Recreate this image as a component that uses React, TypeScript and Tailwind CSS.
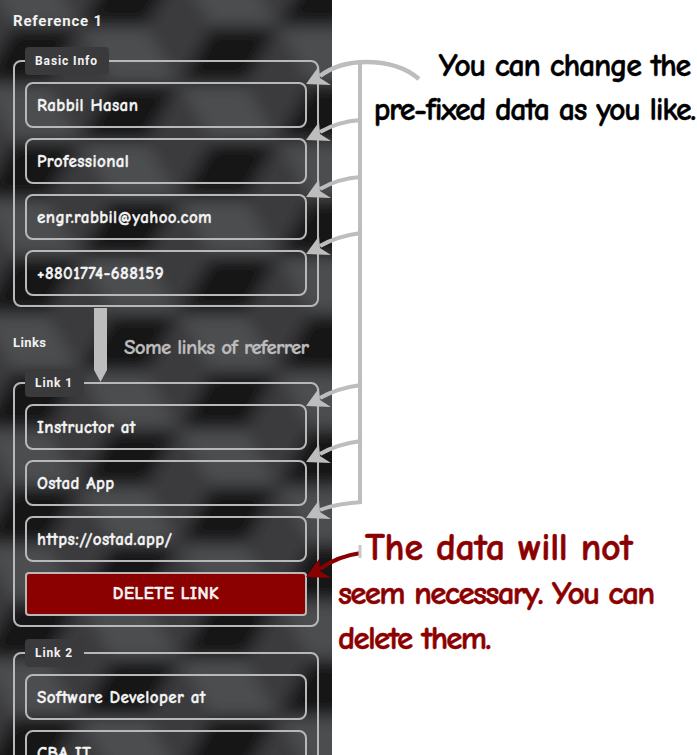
import React from 'react';

const handFont = "font-['Comic_Neue','Comic_Sans_MS',cursive]";
const labelFont = "font-['Roboto',sans-serif]";

const Legend = ({ label, w }: { label: string; w: string }) => (
  <div className={`absolute -top-[15px] left-[10px] h-7 ${w} rounded bg-[#3a3a3c] pl-[10px] text-[12px] font-bold leading-[28px] tracking-[0.9px] text-[#f2f2f2] ${labelFont}`}>
    {label}
  </div>
);

const Field = ({ value }: { value: string }) => (
  <div className={`h-[46px] shrink-0 rounded-lg border-2 border-[#b8b8b8] pl-[10px] text-[17px] font-bold leading-[44px] tracking-[0.4px] text-[#f4f4f4] [-webkit-text-stroke:0.35px_#f4f4f4] ${handFont}`}>
    {value}
  </div>
);

const Group = ({ label, w, fields, children }: { label: string; w: string; fields: string[]; children?: React.ReactNode }) => (
  <div className="relative flex flex-col gap-[10px] rounded-lg border-2 border-[#b8b8b8] px-[10px] pb-[9px] pt-5">
    <Legend label={label} w={w} />
    {fields.map((f) => (
      <Field key={f} value={f} />
    ))}
    {children}
  </div>
);

// tumbling blocks behind the panel, three faces per hexagon
const A = 66;
const H = 57.5;
const faces: { points: string; fill: string }[] = [];
for (let col = -2; col < 5; col++) {
  for (let row = -1; row < 9; row++) {
    const cx = 245 + (col - 2) * (A * 1.5);
    const cy = 84 + row * (H * 2) + (col % 2 === 0 ? 0 : -H);
    faces.push({
      points: `${cx - A},${cy} ${cx - A / 2},${cy - H} ${cx + A / 2},${cy - H} ${cx},${cy}`,
      fill: '#181818',
    });
    faces.push({
      points: `${cx},${cy} ${cx + A / 2},${cy + H} ${cx - A / 2},${cy + H} ${cx - A},${cy}`,
      fill: '#4c4d4f',
    });
    faces.push({
      points: `${cx},${cy} ${cx + A / 2},${cy - H} ${cx + A},${cy} ${cx + A / 2},${cy + H}`,
      fill: '#3a3b3d',
    });
  }
}

const Backdrop = () => (
  <svg className="absolute inset-0" width="332" height="755" viewBox="0 0 332 755">
    <defs>
      <filter id="soft" x="-10%" y="-10%" width="120%" height="120%">
        <feGaussianBlur stdDeviation="8" />
      </filter>
    </defs>
    <rect width="332" height="755" fill="#333436" />
    <g filter="url(#soft)">
      {faces.map((f) => (
        <polygon key={f.points} points={f.points} fill={f.fill} />
      ))}
    </g>
  </svg>
);

const Head = ({ x, y, fill }: { x: number; y: number; fill: string }) => (
  <polygon points={`${x},${y} ${x + 13},${y - 18} ${x + 14},${y - 6} ${x + 25},${y + 1}`} fill={fill} />
);

const ARROW_Y = [84, 140, 197, 254, 406, 462, 518];

const Annotations = () => (
  <svg className="pointer-events-none absolute inset-0" width="697" height="755" viewBox="0 0 697 755" fill="none">
    {/* long vertical rail and its branches */}
    <path d="M360 62V504" stroke="#bdbdbd" strokeWidth="4" />
    <path d="M320 76C332 67 348 62 366 62C388 62 405 67 419 79" stroke="#bdbdbd" strokeWidth="4.5" />
    <path d="M320 132C332 125 346 121 361 120" stroke="#bdbdbd" strokeWidth="4" />
    <path d="M320 189C332 182 346 178 361 177" stroke="#bdbdbd" strokeWidth="4" />
    <path d="M320 246C332 239 346 235 361 233" stroke="#bdbdbd" strokeWidth="4" />
    <path d="M320 398C332 391 346 387 361 385" stroke="#bdbdbd" strokeWidth="4" />
    <path d="M320 454C332 447 346 443 361 441" stroke="#bdbdbd" strokeWidth="4" />
    <path d="M320 510C332 505 348 503 362 502" stroke="#bdbdbd" strokeWidth="4" />
    {ARROW_Y.map((y) => (
      <Head key={y} x={306} y={y} fill="#bdbdbd" />
    ))}
    {/* thick arrow down to Link 1 */}
    <polygon points="94,308 107,308 107,370 100.5,382 94,370" fill="#bdbdbd" />
    {/* dark red arrow to delete button */}
    <path d="M320 569C332 560 346 555 361 553" stroke="#8b0000" strokeWidth="4" />
    <path d="M360 545V558" stroke="#c8c8c8" strokeWidth="3" />
    <Head x={306} y={577} fill="#8b0000" />
  </svg>
);

export default function App() {
  return (
    <div className="relative h-[755px] w-[697px] overflow-hidden bg-white">
      <aside className="relative h-full w-[332px] overflow-hidden">
        <Backdrop />
        <div className="relative px-[13px] pt-[13px]">
          <h2 className={`text-[15px] font-bold leading-4 tracking-[0.8px] text-[#f2f2f2] ${labelFont}`}>Reference 1</h2>
          <div className="mt-[31px]">
            <Group label="Basic Info" w="w-[84px]" fields={['Rabbil Hasan', 'Professional', 'engr.rabbil@yahoo.com', '+8801774-688159']} />
          </div>
          <h3 className={`mt-[28px] text-[13px] font-bold leading-4 tracking-[0.4px] text-[#f2f2f2] ${labelFont}`}>Links</h3>
          <div className="mt-[31px]">
            <Group label="Link 1" w="w-[59px]" fields={['Instructor at', 'Ostad App', 'https://ostad.app/']}>
              <button className={`h-[44px] shrink-0 rounded border-2 border-[#b8b8b8] bg-[#8b0000] text-[17px] font-bold tracking-[0.5px] text-[#f4f4f4] [-webkit-text-stroke:0.5px_#f4f4f4] ${handFont}`}>
                DELETE LINK
              </button>
            </Group>
          </div>
          <div className="mt-[25px]">
            <Group label="Link 2" w="w-[59px]" fields={['Software Developer at', 'CBA IT']} />
          </div>
        </div>
      </aside>
      <Annotations />
      <div className={`absolute right-[2px] top-[44px] whitespace-nowrap text-right text-[32px] font-bold leading-[44px] tracking-[-1.3px] text-black [-webkit-text-stroke:0.4px_#000] ${handFont}`}>
        <div className="pr-[5px]">You can change the</div>
        <div>pre-fixed data as you like.</div>
      </div>
      <div className={`absolute left-[124px] top-[332px] whitespace-nowrap text-[21px] font-bold tracking-[-0.7px] text-[#bdbdbd] [-webkit-text-stroke:0.3px_#bdbdbd] ${handFont}`}>Some links of referrer</div>
      <div className={`absolute left-[338px] top-[526px] whitespace-nowrap text-[33px] font-bold leading-[45px] tracking-[-1.7px] text-[#8b0000] [-webkit-text-stroke:0.5px_#8b0000] ${handFont}`}>
        <div className="pl-[27px] text-[38px] tracking-[-0.3px]">The data will not</div>
        <div>seem necessary. You can</div>
        <div>delete them.</div>
      </div>
    </div>
  );
}
